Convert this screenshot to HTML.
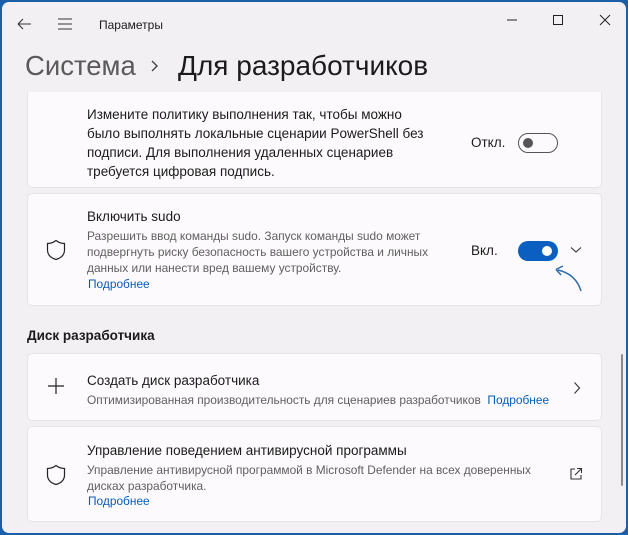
<!DOCTYPE html>
<html><head><meta charset="utf-8"><style>
*{margin:0;padding:0;box-sizing:border-box}
html,body{width:628px;height:535px;overflow:hidden;background:#1a5fa8}
body{font-family:"Segoe UI","Liberation Sans",sans-serif;color:#1b1b1b}
.win{position:absolute;left:2px;top:2px;width:624px;height:531px;background:#f3f0f4;border-radius:7px;overflow:hidden}
.abs{position:absolute;white-space:nowrap}
.card{position:absolute;left:25px;width:575px;background:#fcfafc;border:1px solid #e6e3e6;border-radius:5px}
.t{font-size:13.5px;color:#1b1b1b}
.d{font-size:11.9px;color:#5f5f5f;line-height:16px}
.l{font-size:11.9px;color:#0a5bb5}
</style></head><body>
<div class="win">
 <svg class="abs" style="left:14px;top:15px" width="16" height="14"><path d="M2 7H15M2 7L7 2M2 7L7 12" stroke="#333" stroke-width="1.1" fill="none"/></svg>
 <svg class="abs" style="left:55px;top:15px" width="16" height="14"><path d="M1 2H15M1 7H15M1 12H15" stroke="#333" stroke-width="1.1"/></svg>
 <div class="abs" style="left:97px;top:16px;font-size:12px">Параметры</div>
 <svg class="abs" style="left:505px;top:10px" width="110" height="16"><path d="M0 8H10" stroke="#222" stroke-width="1"/><rect x="46.5" y="3.5" width="9" height="9" fill="none" stroke="#222"/><path d="M93 3L103 13M103 3L93 13" stroke="#222"/></svg>
 <div class="abs" style="left:23px;top:48px;font-size:27.5px;color:#5a5a5a">Система</div>
 <svg class="abs" style="left:148px;top:57px" width="10" height="14"><path d="M2 2L7 7L2 12" stroke="#444" stroke-width="1.4" fill="none"/></svg>
 <div class="abs" style="left:176px;top:48px;font-size:28px;color:#1b1b1b">Для разработчиков</div>

 <div class="card" style="top:90px;height:96px;border-top:none;border-radius:0 0 5px 5px">
  <div class="abs t" style="left:59px;top:13px;line-height:19px">Измените политику выполнения так, чтобы можно<br>было выполнять локальные сценарии PowerShell без<br>подписи. Для выполнения удаленных сценариев<br>требуется цифровая подпись.</div>
  <div class="abs t" style="left:443px;top:43px">Откл.</div>
  <div class="abs" style="left:490px;top:41px;width:40px;height:20px;border:1px solid #555;border-radius:10px"><div style="position:absolute;left:4px;top:4px;width:10px;height:10px;border-radius:50%;background:#555"></div></div>
 </div>

 <div class="card" style="top:191px;height:113px">
  <svg class="abs" style="left:18px;top:45px" width="20" height="22"><path d="M10 1.5C7 3.8 4.5 4.5 1.5 4.5V11C1.5 16 5 19 10 20.5C15 19 18.5 16 18.5 11V4.5C15.5 4.5 13 3.8 10 1.5Z" stroke="#222" stroke-width="1.2" fill="none"/></svg>
  <div class="abs t" style="left:59px;top:15px">Включить sudo</div>
  <div class="abs d" style="left:59px;top:34px">Разрешить ввод команды sudo. Запуск команды sudo может<br>подвергнуть риску безопасность вашего устройства и личных<br>данных или нанести вред вашему устройству.</div>
  <div class="abs l" style="left:60px;top:83px">Подробнее</div>
  <div class="abs t" style="left:443px;top:49px">Вкл.</div>
  <div class="abs" style="left:490px;top:47px;width:40px;height:20px;background:#0a5fc0;border-radius:10px"><div style="position:absolute;left:24px;top:5px;width:10px;height:10px;border-radius:50%;background:#fff"></div></div>
  <svg class="abs" style="left:542px;top:52px" width="12" height="8"><path d="M1 1.5L6 6L11 1.5" stroke="#333" stroke-width="1.1" fill="none"/></svg>
 </div>
 <svg class="abs" style="left:545px;top:255px" width="40" height="40"><path d="M34 34C31 24 24 16 11 13" stroke="#2f6aa8" stroke-width="1.5" fill="none"/><path d="M9 12.5L16 9M9 12.5L14 18" stroke="#2f6aa8" stroke-width="1.5" fill="none"/></svg>

 <div class="abs" style="left:25px;top:326px;font-size:13.5px;font-weight:bold;color:#1b1b1b">Диск разработчика</div>

 <div class="card" style="top:351px;height:68px">
  <svg class="abs" style="left:18px;top:22px" width="20" height="20"><path d="M10 2V18M2 10H18" stroke="#222" stroke-width="1.2"/></svg>
  <div class="abs t" style="left:59px;top:19px">Создать диск разработчика</div>
  <div class="abs d" style="left:59px;top:38px">Оптимизированная производительность для сценариев разработчиков <span class="l">&nbsp;Подробнее</span></div>
  <svg class="abs" style="left:545px;top:27px" width="8" height="14"><path d="M1.5 1.5L6.5 7L1.5 12.5" stroke="#333" stroke-width="1.1" fill="none"/></svg>
 </div>

 <div class="card" style="top:424px;height:96px">
  <svg class="abs" style="left:18px;top:37px" width="20" height="22"><path d="M10 1.5C7 3.8 4.5 4.5 1.5 4.5V11C1.5 16 5 19 10 20.5C15 19 18.5 16 18.5 11V4.5C15.5 4.5 13 3.8 10 1.5Z" stroke="#222" stroke-width="1.2" fill="none"/></svg>
  <div class="abs t" style="left:59px;top:16px">Управление поведением антивирусной программы</div>
  <div class="abs d" style="left:59px;top:35px">Управление антивирусной программой в Microsoft Defender на всех доверенных<br>дисках разработчика.</div>
  <div class="abs l" style="left:60px;top:67px">Подробнее</div>
  <svg class="abs" style="left:541px;top:40px" width="14" height="14"><path d="M6 2H2V12H12V8M8 1.5H12.5V6M12.5 1.5L6 8" stroke="#333" stroke-width="1.1" fill="none"/></svg>
 </div>
 <div class="abs" style="left:619px;top:352px;width:2px;height:132px;background:#8a8a8a;border-radius:1px"></div>
</div>
</body></html>
